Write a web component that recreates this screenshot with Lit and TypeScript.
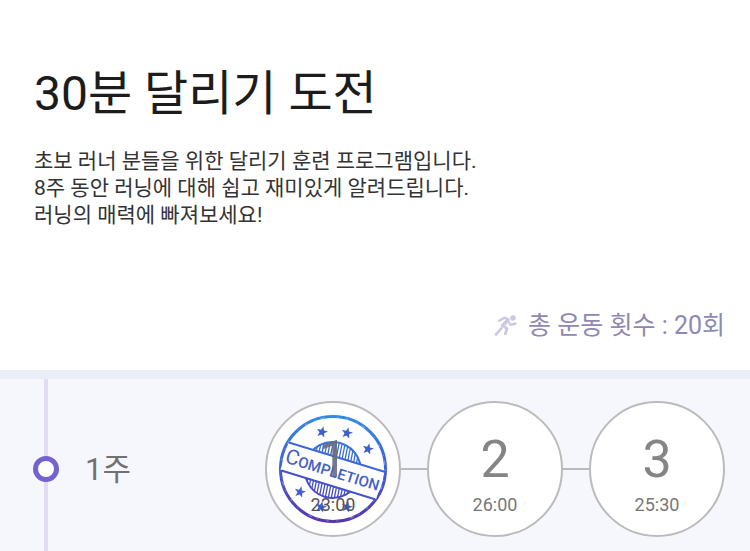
import { LitElement, html, css, svg, nothing } from "lit";
import { customElement, property } from "lit/decorators.js";

const STAR = "M0-6 1.5-2 5.7-1.9 2.4.8 3.5 4.9 0 2.5-3.5 4.9-2.4.8-5.7-1.9-1.5-2Z";
const STARS = [
  [-11, -37], [14, -36], [35, -20],
  [-33, 23], [-12, 38], [14, 38],
];
const HATCH = Array.from({ length: 18 }, (_, i) => -26 + i * 3);

@customElement("completion-stamp")
export class CompletionStamp extends LitElement {
  static styles = css`
    :host { display: block; }
    .stamp { display: block; width: 100%; height: 100%; }
    .word { font-family: Roboto, "Liberation Sans", sans-serif; font-weight: 500; font-size: 15px; }
    .initial { font-size: 21px; font-weight: 400; }
  `;

  render() {
    return html`
      <svg class="stamp" viewBox="-56 -56 112 112" role="img" aria-label="Completion">
        <defs>
          <linearGradient id="ink" gradientUnits="userSpaceOnUse" x1="0" y1="-54" x2="0" y2="54">
            <stop offset="0" stop-color="#3289e6" />
            <stop offset=".5" stop-color="#3f5fd0" />
            <stop offset="1" stop-color="#5535b0" />
          </linearGradient>
          <clipPath id="disc"><circle cy="1" r="28" /></clipPath>
        </defs>
        <g fill="none" stroke="url(#ink)">
          <circle r="52.5" stroke-width="3" />
          <circle r="52" stroke="#fff" stroke-opacity=".4" stroke-dasharray="2 9 1 5 4 13 1 8" />
        </g>
        <g transform="rotate(17)" fill="none" stroke="url(#ink)">
          <circle cy="1" r="28" stroke-width="2" />
          <g stroke-width="1.3" clip-path="url(#disc)">
            ${HATCH.map((x) => svg`<path d=${`M${x - 3}-30L${x + 3} 30`} />`)}
          </g>
          <path fill="#fff" stroke="none" d="M-50-12H50V16H-50Z" />
          <path stroke-width="2" d="M-50-12.5 50-12.4M-49 16.5 49 16.6" />
        </g>
        <g fill="url(#ink)">
          ${STARS.map(([x, y]) => svg`<path transform=${`translate(${x} ${y}) rotate(14)`} d=${STAR} />`)}
        </g>
        <text class="word" fill="#4460c8" text-anchor="middle" transform="rotate(17)" x="0" y="8"><tspan class="initial">C</tspan>OMPLETION</text>
      </svg>
    `;
  }
}

@customElement("session-circle")
export class SessionCircle extends LitElement {
  @property({ type: Number }) number = 1;
  @property() time = "";
  @property({ type: Boolean }) done = false;

  static styles = css`
    :host { display: block; }
    .circle {
      position: relative;
      box-sizing: border-box;
      display: flex;
      flex-direction: column;
      align-items: center;
      width: 136px;
      height: 136px;
      padding: 28px 0 0;
      border: 2px solid #bbb;
      border-radius: 50%;
      background: #fff;
      font-family: Roboto, "Noto Sans CJK KR", sans-serif;
      cursor: pointer;
    }
    .number { font-size: 52px; line-height: 58px; color: #858585; }
    .time { margin-top: 6px; font-size: 18px; line-height: 20px; color: #777; }
    .done .number, .done .time { position: relative; z-index: 1; }
    .done .number { color: #666c80; opacity: 0.9; }
    .done .time { color: #555; }
    completion-stamp { position: absolute; inset: 10px; }
  `;

  render() {
    return html`
      <button class="circle ${this.done ? "done" : ""}" type="button">
        ${this.done ? html`<completion-stamp></completion-stamp>` : nothing}
        <span class="number">${this.number}</span>
        <span class="time">${this.time}</span>
      </button>
    `;
  }
}

@customElement("app-root")
export class AppRoot extends LitElement {
  static styles = css`
    :host {
      display: flex;
      flex-direction: column;
      min-height: 100vh;
      background: #fff;
      font-family: Roboto, "Noto Sans CJK KR", sans-serif;
    }
    .intro { padding: 60px 25px 27px 34px; }
    .title { margin: 0; font-size: 48px; line-height: 68px; font-weight: 400; color: #1c1c1c; }
    .description { margin: 20px 0 0; font-size: 21px; line-height: 27px; color: #333; }
    .total {
      display: flex;
      justify-content: flex-end;
      align-items: center;
      gap: 10px;
      margin: 80px 0 0;
      font-size: 25px;
      line-height: 34px;
      color: #8f88b5;
    }
    .runner { width: 24px; height: 24px; }
    .week {
      flex: 1;
      display: flex;
      align-items: stretch;
      border-top: 9px solid #ebeef6;
      background: #f6f7fc;
    }
    .rail {
      display: flex;
      justify-content: center;
      align-items: center;
      width: 26px;
      margin-left: 33px;
      background: linear-gradient(#e1dcf2, #e1dcf2) center / 4px 100% no-repeat;
    }
    .dot {
      box-sizing: border-box;
      width: 26px;
      height: 26px;
      border: 5px solid #7661d0;
      border-radius: 50%;
      background: #fff;
    }
    .label { align-self: center; margin: 0 0 0 26px; font-size: 31px; line-height: 42px; font-weight: 400; color: #717171; }
    .sessions {
      display: flex;
      align-items: center;
      margin: 0 0 0 auto;
      padding: 22px 25px 14px 0;
      list-style: none;
    }
    .session { display: flex; align-items: center; }
    .session + .session::before { content: ""; width: 26px; height: 2px; background: #bbb; }
    .rail { padding-top: 8px; }
    .label { padding-top: 10px; }
  `;

  private sessions = [
    { number: 1, time: "23:00", done: true },
    { number: 2, time: "26:00", done: false },
    { number: 3, time: "25:30", done: false },
  ];

  render() {
    return html`
      <header class="intro">
        <h1 class="title">30분 달리기 도전</h1>
        <p class="description">
          초보 러너 분들을 위한 달리기 훈련 프로그램입니다.<br />
          8주 동안 러닝에 대해 쉽고 재미있게 알려드립니다.<br />
          러닝의 매력에 빠져보세요!
        </p>
        <p class="total">
          <svg class="runner" viewBox="0 0 24 24" fill="none" stroke="#cdc8e2" stroke-linecap="round" stroke-linejoin="round" aria-hidden="true">
            <circle cx="19" cy="4" r="2.8" fill="#cdc8e2" stroke="none" />
            <path stroke-width="2.4" d="M5.3 6.7 10.3 3.7 14.3 5.3M14.3 7.7 17 10.9 21.5 9.5" />
            <path stroke-width="3.6" d="M13.7 6.3 8.7 11.5" />
            <path stroke-width="2.8" d="M8.7 11.5 13 14.6 11.3 19.8M7.2 14.6 2 20.4" />
          </svg>
          <span>총 운동 횟수 : 20회</span>
        </p>
      </header>
      <section class="week">
        <div class="rail"><span class="dot"></span></div>
        <h2 class="label">1주</h2>
        <ol class="sessions">
          ${this.sessions.map((s) => html`
            <li class="session">
              <session-circle .number=${s.number} .time=${s.time} .done=${s.done}></session-circle>
            </li>
          `)}
        </ol>
      </section>
    `;
  }
}
